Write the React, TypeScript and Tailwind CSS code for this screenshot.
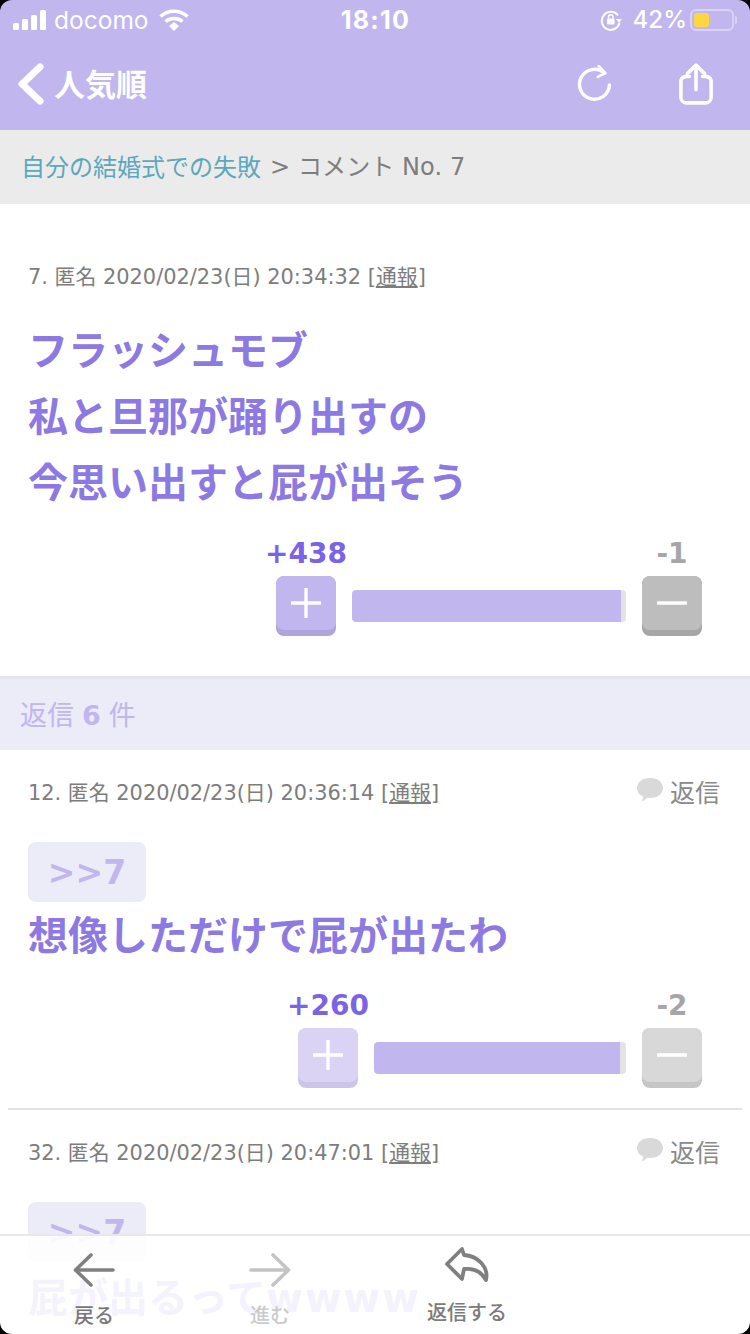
import type { ReactNode } from "react";

const sans = "font-['DejaVu_Sans','Noto_Sans_CJK_JP',sans-serif]";

function StatusBar() {
  return (
    <div className="h-[40px] flex items-center justify-between pl-[13px] pr-[16px] text-white font-['Inter','Noto_Sans',sans-serif]">
      <div className="flex items-center w-[200px]">
        <svg width="34" height="20" viewBox="0 0 34 20" fill="white">
          <rect x="0" y="13" width="6" height="7" rx="1.5" />
          <rect x="9" y="9" width="6" height="11" rx="1.5" />
          <rect x="18" y="5" width="6" height="15" rx="1.5" />
          <rect x="27" y="0" width="6" height="20" rx="1.5" />
        </svg>
        <span className="ml-[7px] text-[24.500px] leading-none">docomo</span>
        <svg className="ml-[10px]" width="30" height="22" viewBox="0 0 30 22" fill="none" stroke="white" strokeWidth="3.4">
          <path d="M1.5 7.5C9 0.5 21 0.5 28.5 7.5" />
          <path d="M6.5 12.5C11 8.5 19 8.5 23.5 12.5" />
          <path d="M10 17l5-4 5 4-5 5z" fill="white" stroke="none" />
        </svg>
      </div>
      <span className="ml-[4px] text-[25px] font-bold leading-none tracking-[1.3px]">18:10</span>
      <div className="flex items-center justify-end w-[200px]">
        <svg width="22" height="22" viewBox="0 0 22 22" fill="none" stroke="white" strokeWidth="2">
          <path d="M18 6.5A9 9 0 1 0 19.5 14" />
          <path d="M16 10h6l-3 4z" fill="white" stroke="none" />
          <rect x="7" y="9.5" width="7.5" height="6" rx="1" fill="white" stroke="none" />
          <path d="M8.5 9.5V8a2.2 2.2 0 0 1 4.5 0v1.5" strokeWidth="1.4" />
        </svg>
        <span className="ml-[11px] text-[24px] font-medium leading-none">42%</span>
        <div className="relative ml-[3px] w-[44px] h-[22px] rounded-[6px] border-2 border-white/40 p-[2px]">
          <div className="w-[15px] h-full rounded-[3px] bg-[#fbd83f]" />
          <div className="absolute -right-[5px] top-[5px] w-[2px] h-[8px] rounded-r bg-white/40" />
        </div>
      </div>
    </div>
  );
}

function NavBar() {
  return (
    <div className="h-[90px] flex items-center pl-[16px] text-white">
      <svg className="-mt-[2px]" width="30" height="46" viewBox="0 0 30 46" fill="none" stroke="white" strokeWidth="7" strokeLinecap="round" strokeLinejoin="round">
        <path d="M24 6L6 23l18 17" />
      </svg>
      <span className="ml-[8px] -mt-[5px] text-[31px] font-bold leading-none font-['Noto_Sans_CJK_JP',sans-serif]">人気順</span>
      <div className="ml-auto -mt-[2px] flex items-center pr-[37px]">
        <svg width="36" height="38" viewBox="0 0 38 40" fill="none" stroke="white" strokeWidth="3.6" strokeLinecap="round">
          <path d="M30 8.5A15.8 15.8 0 1 0 35.3 21" />
          <path d="M24 1l7 7.5-8 4" strokeWidth="2.8" strokeLinejoin="round" />
        </svg>
        <svg className="ml-[67px]" width="34" height="42" viewBox="0 0 36 44" fill="none" stroke="white" strokeWidth="3.8" strokeLinecap="round" strokeLinejoin="round">
          <path d="M11 14H8a6 6 0 0 0-6 4v18a6 6 0 0 0 6 6h20a6 6 0 0 0 6-6V18a6 6 0 0 0-6-4h-3" />
          <path d="M18 28V3" />
          <path d="M9 11l9-9 9 9" />
        </svg>
      </div>
    </div>
  );
}

function VoteButton({ kind, faded }: { kind: "plus" | "minus"; faded?: boolean }) {
  const plus = kind === "plus";
  const face = plus ? (faded ? "bg-[#dad3f4]" : "bg-[#c1b6ee]") : faded ? "bg-[#d8d8d8]" : "bg-[#bdbdbd]";
  const edge = plus ? (faded ? "bg-[#cdc5e8]" : "bg-[#afa4dc]") : faded ? "bg-[#c6c6c6]" : "bg-[#a6a6a6]";
  return (
    <div className={`w-[60px] h-[60px] rounded-[8px] overflow-hidden ${edge}`}>
      <div className={`h-[54px] rounded-[8px] flex items-center justify-center ${face}`}>
        <svg width="30" height="30" viewBox="0 0 30 30" fill="none" stroke="white" strokeWidth="3.4" strokeLinecap="round">
          <path d="M1 15h28" />
          {plus && <path d="M15 1v28" />}
        </svg>
      </div>
    </div>
  );
}

function Votes({ up, down, width, faded, upWidth }: { up: string; down: string; width: number; faded?: boolean; upWidth: number }) {
  return (
    <div className="flex justify-end pr-[48px]">
      <div className={sans}>
        <div className="flex justify-between h-[32px] items-end text-[28px] leading-none font-bold">
          <span className="text-[#7b63e6] -ml-[12px] w-[84px] text-center whitespace-nowrap">{up}</span>
          <span className="text-[#a6a6a6] w-[60px] text-center">{down}</span>
        </div>
        <div className="flex items-center mt-[8px]">
          <VoteButton kind="plus" faded={faded} />
          <div className="mx-[16px] h-[32px] rounded-[4px] bg-[#e3e3e3] overflow-hidden" style={{ width }}>
            <div className="h-full bg-[#c1b6ee] rounded-l-[4px]" style={{ width: upWidth }} />
          </div>
          <VoteButton kind="minus" faded={faded} />
        </div>
      </div>
    </div>
  );
}

function Meta({ no, time, reply }: { no: number; time: string; reply?: boolean }) {
  return (
    <div className={`flex items-center justify-between pl-[28px] pr-[30px] text-[#7d7d7d] ${sans}`}>
      <p className="text-[20.900px] leading-[28px] whitespace-nowrap">
        {no}. 匿名 2020/02/23(日) {time} [<span className="underline">通報</span>]
      </p>
      {reply && (
        <div className="flex items-center -mt-[3px] text-[25px] leading-none text-[#8a8a8a]">
          <svg width="28" height="24" viewBox="0 0 28 24" fill="#d9d9d9" className="-mt-[3px]">
            <path d="M14 0c7.5 0 13 4 13 10s-5.500 10-13 10c-1 0-2 0-3-.2C9.500 21.500 7.500 23 5.500 23.500c1-1.500 1.500-3 1.500-5C3 17 1 14 1 10 1 4 6.500 0 14 0z" />
          </svg>
          <span className="ml-[6px] font-['Noto_Sans_CJK_JP',sans-serif]">返信</span>
        </div>
      )}
    </div>
  );
}

function Quote() {
  return (
    <div className={`ml-[28px] w-[118px] h-[60px] rounded-[8px] bg-[#ecebf8] flex items-center justify-center text-[#c1b6ee] text-[33px] font-bold leading-none ${sans}`}>
      &gt;&gt;7
    </div>
  );
}

function Body({ lines }: { lines: ReactNode[] }) {
  return (
    <div className="px-[28px] text-[#8d79e2] text-[40px] leading-[66px] font-bold font-['Noto_Sans_CJK_JP',sans-serif]">
      {lines.map((l, i) => (
        <p key={i} className="whitespace-nowrap">{l}</p>
      ))}
    </div>
  );
}

function BottomBar() {
  const label = "text-[20px] leading-none font-medium font-['Noto_Sans_CJK_JP',sans-serif]";
  return (
    <div className="absolute left-0 right-0 bottom-0 h-[100px] bg-white/90 border-t-2 border-[#e8e8e8] flex items-start">
      <div className="ml-[34px] w-[120px] flex flex-col items-center pt-[16px] text-[#777777]">
        <svg width="42" height="36" viewBox="0 0 42 36" fill="none" stroke="#808080" strokeWidth="3.6" strokeLinecap="round" strokeLinejoin="round">
          <path d="M40 18H3" />
          <path d="M18 3L2.500 18 18 33" />
        </svg>
        <span className={`mt-[17px] ${label}`}>戻る</span>
      </div>
      <div className="ml-[56px] w-[120px] flex flex-col items-center pt-[16px] text-[#cbcbcb]">
        <svg width="42" height="36" viewBox="0 0 42 36" fill="none" stroke="#c4c4c4" strokeWidth="3.6" strokeLinecap="round" strokeLinejoin="round">
          <path d="M2 18h37" />
          <path d="M24 3l15.500 15L24 33" />
        </svg>
        <span className={`mt-[17px] ${label}`}>進む</span>
      </div>
      <div className="ml-[77px] w-[120px] flex flex-col items-center pt-[10px] text-[#7b7b7b]">
        <svg width="46" height="36" viewBox="0 0 46 36" fill="none" stroke="#808080" strokeWidth="3.8" strokeLinejoin="round" strokeLinecap="round">
          <path d="M18 3L3 18l15 15 2-10c9-1 17 2 22 11 3-13-8-24-22-25z" />
        </svg>
        <span className={`mt-[20px] ${label}`}>返信する</span>
      </div>
    </div>
  );
}

export default function App() {
  return (
    <div className={`relative w-[750px] h-[1334px] overflow-hidden bg-white ${sans}`}>
      <div className="bg-[#c1b6ee] h-[130px]">
        <StatusBar />
        <NavBar />
      </div>

      <div className="h-[74px] bg-[#ebebeb] flex items-center pl-[21px] text-[24px] leading-none text-[#7d7d7d] whitespace-nowrap">
        <span className="-mt-[2px] text-[#5ba8bd] font-['Noto_Sans_CJK_JP',sans-serif]">自分の結婚式での失敗</span>
        <span className="ml-[9px] tracking-[0.1px]">&gt; コメント No. 7</span>
      </div>

      {/* Main comment */}
      <div className="h-[472px] pt-[59px]">
        <Meta no={7} time="20:34:32" />
        <div className="mt-[24px]">
          <Body lines={["フラッシュモブ", "私と旦那が踊り出すの", "今思い出すと屁が出そう"]} />
        </div>
        <div className="mt-[23px]">
          <Votes up="+438" down="-1" width={274} upWidth={269} />
        </div>
      </div>

      {/* Replies */}
      <div className="h-[74px] bg-[#ecebf8] border-t-[3px] border-[#e6e6ec] flex items-center pl-[20px] pt-[2px] text-[27px] text-[#c1b6ee] leading-none">
        返信 <b className="mx-[8px]">6</b> 件
      </div>

      <div className="h-[358px] pt-[29px]">
        <Meta no={12} time="20:36:14" reply />
        <div className="mt-[35px]"><Quote /></div>
        <div className="-mt-[2px]">
          <Body lines={["想像しただけで屁が出たわ"]} />
        </div>
        <div className="mt-[22px]">
          <Votes up="+260" down="-2" width={252} upWidth={246} faded />
        </div>
      </div>
      <div className="mx-[8px] h-[2px] bg-[#e3e3e3]" />

      <div className="pt-[29px]">
        <Meta no={32} time="20:47:01" reply />
        <div className="mt-[35px]"><Quote /></div>
        <Body lines={[<>屁が出るって<span className="font-['DejaVu_Sans',sans-serif] tracking-[1.7px]">wwww</span></>]} />
      </div>

      <BottomBar />

      {/* screen corners */}
      <svg className="absolute left-0 top-0" width="12" height="12" viewBox="0 0 12 12"><path d="M0 0h12A12 12 0 0 0 0 12z" fill="#000" /></svg>
      <svg className="absolute right-0 top-0" width="12" height="12" viewBox="0 0 12 12"><path d="M12 0H0a12 12 0 0 1 12 12z" fill="#000" /></svg>
      <svg className="absolute left-0 bottom-0" width="12" height="12" viewBox="0 0 12 12"><path d="M0 12h12A12 12 0 0 1 0 0z" fill="#000" /></svg>
      <svg className="absolute right-0 bottom-0" width="12" height="12" viewBox="0 0 12 12"><path d="M12 12H0a12 12 0 0 0 12-12z" fill="#000" /></svg>
    </div>
  );
}
